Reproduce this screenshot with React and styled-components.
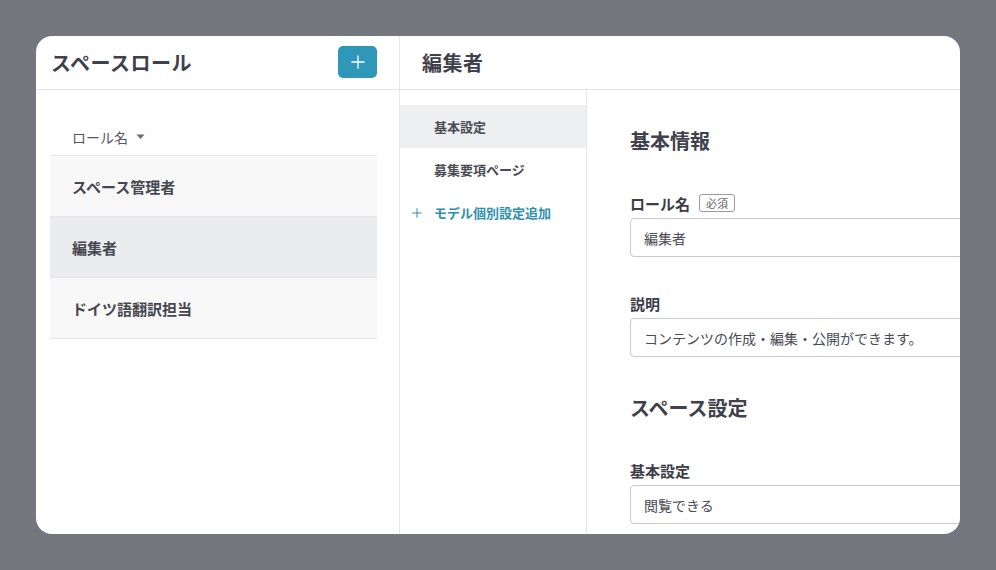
import React from 'react';
import styled, { createGlobalStyle } from 'styled-components';

const GlobalStyle = createGlobalStyle`
  html, body {
    margin: 0;
    padding: 0;
    background: #75777f;
    font-family: 'Noto Sans CJK JP', 'Noto Sans', sans-serif;
    color: #3f404b;
  }
`;

const Page = styled.div`
  padding: 36px;
  height: 570px;
  box-sizing: border-box;
`;

const Card = styled.div`
  width: 924px;
  height: 498px;
  background: #fff;
  border-radius: 16px;
  overflow: hidden;
  display: flex;
`;

const Side = styled.div`
  width: 363px;
  flex-shrink: 0;
  border-right: 1px solid #e6e7ea;
  display: flex;
  flex-direction: column;
`;

const PanelHeader = styled.div`
  height: 54px;
  box-sizing: border-box;
  border-bottom: 1px solid #e3e4e8;
  display: flex;
  align-items: center;
  justify-content: space-between;
  padding: 0 22px 0 ${({ $left }) => $left || 15}px;
  flex-shrink: 0;
`;

const Title = styled.h1`
  margin: 0;
  font-size: 20px;
  font-weight: 700;
  color: #3f404b;
  letter-spacing: 0.5px;
`;

const AddButton = styled.button`
  width: 39px;
  height: 32px;
  margin-top: -2px;
  border: none;
  border-radius: 5px;
  background: #2f97b7;
  color: #fff;
  display: flex;
  align-items: center;
  justify-content: center;
  padding: 0;
`;

const List = styled.div`
  padding: 28px 22px 0 14px;
`;

const ListHead = styled.div`
  height: 37px;
  display: flex;
  align-items: center;
  gap: 8px;
  padding-left: 22px;
  font-size: 14px;
  color: #55565f;
  border-bottom: 1px solid #e6e7ea;
`;

const Row = styled.div`
  height: 60px;
  display: flex;
  align-items: center;
  padding-left: 22px;
  font-size: 15px;
  font-weight: 700;
  color: #45464f;
  background: ${({ $active }) => ($active ? '#ebecee' : '#f8f8f9')};
  border-bottom: 1px solid #e4e5e8;
`;

const Main = styled.div`
  flex: 1;
  display: flex;
  flex-direction: column;
  min-width: 0;
`;

const Body = styled.div`
  flex: 1;
  display: flex;
`;

const SubNav = styled.div`
  width: 187px;
  flex-shrink: 0;
  border-right: 1px solid #e6e7ea;
  padding-top: 15px;
  box-sizing: border-box;
`;

const NavItem = styled.div`
  height: 43px;
  display: flex;
  align-items: center;
  padding-left: ${({ $add }) => ($add ? 12 : 34)}px;
  gap: 12px;
  font-size: 13px;
  font-weight: 700;
  color: ${({ $add }) => ($add ? '#2f8fae' : '#4a4b55')};
  background: ${({ $active }) => ($active ? '#eeeff1' : 'transparent')};
`;

const Content = styled.div`
  flex: 1;
  padding: 36px 0 0 43px;
  display: flex;
  flex-direction: column;
  min-width: 0;
`;

const SectionTitle = styled.h2`
  margin: 0 0 37px;
  font-size: 20px;
  line-height: 30px;
  font-weight: 700;
  color: #40414c;
`;

const Field = styled.div`
  margin-bottom: 36px;
`;

const Label = styled.div`
  display: flex;
  align-items: center;
  gap: 9px;
  height: 20px;
  font-size: 15px;
  font-weight: 700;
  color: #3c3d47;
  margin-bottom: 5px;
`;

const Badge = styled.span`
  font-size: 11px;
  font-weight: 400;
  color: #666;
  border: 1px solid #9a9ba2;
  border-radius: 3px;
  padding: 0 6px;
  line-height: 16px;
`;

const Input = styled.div`
  width: 420px;
  height: 39px;
  box-sizing: border-box;
  border: 1px solid #c9cacf;
  border-radius: 4px;
  display: flex;
  align-items: center;
  padding-left: 13px;
  font-size: 14px;
  color: #4a4b55;
  flex-shrink: 0;
`;

const Caret = () => (
  <svg width="9" height="6" viewBox="0 0 9 6">
    <path d="M0.5 0.5h8L4.5 5z" fill="#6a6b73" />
  </svg>
);

const Plus = ({ size = 14, stroke = '#fff', width = 1.5 }) => (
  <svg width={size} height={size} viewBox="0 0 16 16">
    <path d="M8 1v14M1 8h14" stroke={stroke} strokeWidth={width} strokeLinecap="round" />
  </svg>
);

const roles = ['スペース管理者', '編集者', 'ドイツ語翻訳担当'];

export default function App() {
  return (
    <>
      <GlobalStyle />
      <Page>
        <Card>
          <Side>
            <PanelHeader>
              <Title>スペースロール</Title>
              <AddButton>
                <Plus />
              </AddButton>
            </PanelHeader>
            <List>
              <ListHead>
                ロール名 <Caret />
              </ListHead>
              {roles.map((r) => (
                <Row key={r} $active={r === '編集者'}>
                  {r}
                </Row>
              ))}
            </List>
          </Side>
          <Main>
            <PanelHeader $left={22}>
              <Title>編集者</Title>
            </PanelHeader>
            <Body>
              <SubNav>
                <NavItem $active>基本設定</NavItem>
                <NavItem>募集要項ページ</NavItem>
                <NavItem $add>
                  <Plus size={10} stroke="#2f8fae" width={1.6} />
                  モデル個別設定追加
                </NavItem>
              </SubNav>
              <Content>
                <SectionTitle>基本情報</SectionTitle>
                <Field>
                  <Label>
                    ロール名 <Badge>必須</Badge>
                  </Label>
                  <Input>編集者</Input>
                </Field>
                <Field>
                  <Label>説明</Label>
                  <Input>コンテンツの作成・編集・公開ができます。</Input>
                </Field>
                <SectionTitle>スペース設定</SectionTitle>
                <Field>
                  <Label>基本設定</Label>
                  <Input>閲覧できる</Input>
                </Field>
              </Content>
            </Body>
          </Main>
        </Card>
      </Page>
    </>
  );
}
